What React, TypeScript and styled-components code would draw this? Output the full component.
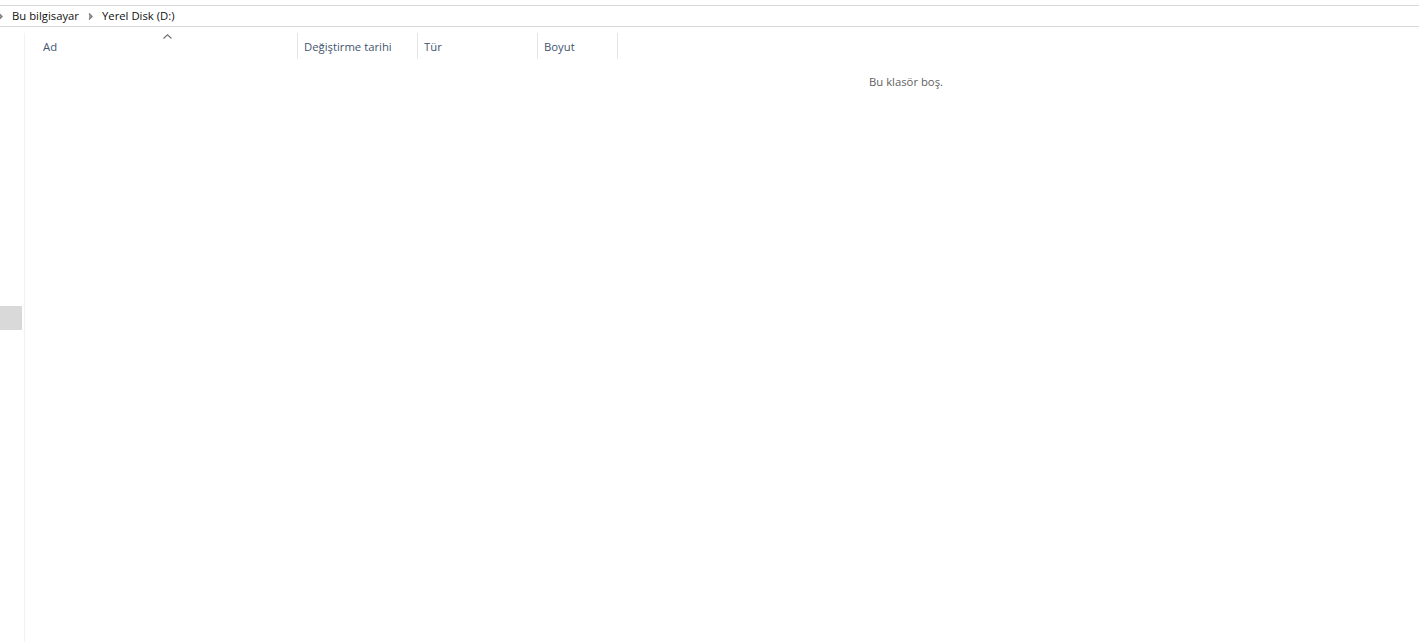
import React from "react";
import styled, { createGlobalStyle } from "styled-components";

const Global = createGlobalStyle`
  html, body { margin: 0; padding: 0; background: #fff; overflow: hidden; }
  body { font-family: "Open Sans", "Noto Sans", "Liberation Sans", sans-serif; font-size: 12px; }
`;

const Page = styled.div`
  height: 642px;
  display: flex;
  flex-direction: column;
  padding-top: 5px;
  box-sizing: border-box;
`;

const AddressBar = styled.div`
  height: 22px;
  box-sizing: border-box;
  border-top: 1px solid #d9d9d9;
  border-bottom: 1px solid #d9d9d9;
  padding-bottom: 2px;
  display: flex;
  align-items: center;
  color: #111;
  font-size: 11.3px;
`;

const Crumb = styled.span`
  white-space: nowrap;
`;

const Chevron = styled.svg<{ $lead: number; $gap: number }>`
  width: 5px;
  height: 7px;
  flex: none;
  margin: 2px ${(p) => p.$gap}px 0 ${(p) => p.$lead}px;
`;

const Body = styled.div`
  flex: 1;
  display: flex;
  min-height: 0;
`;

const NavPane = styled.div`
  width: 25px;
  box-sizing: border-box;
  margin-top: 6px;
  border-right: 1px solid #f2f2f2;
  padding-top: 273px;
`;

const NavSelection = styled.div`
  width: 22px;
  height: 24px;
  background: #d9d9d9;
`;

const Content = styled.div`
  flex: 1;
  min-width: 0;
  display: flex;
  flex-direction: column;
`;

const HeaderRow = styled.div`
  display: flex;
  height: 26px;
  margin-top: 6px;
  padding-left: 12px;
`;

const HeaderCell = styled.div<{ $width: number }>`
  position: relative;
  width: ${(p) => p.$width}px;
  box-sizing: border-box;
  padding-left: 6px;
  border-right: 1px solid #e5e5e5;
  color: #435570;
  font-size: 11.3px;
  line-height: 27px;
  white-space: nowrap;
`;

const SortArrow = styled.svg`
  position: absolute;
  left: 126px;
  top: 1px;
  width: 9px;
  height: 5px;
`;

const EmptyNote = styled.div`
  margin-top: 15px;
  padding-left: 844px;
  color: #5f5f5f;
  font-size: 11.3px;
  line-height: 16px;
  white-space: nowrap;
`;

const Arrow = ({ lead, gap }: { lead: number; gap: number }) => (
  <Chevron $lead={lead} $gap={gap} viewBox="0 0 5 7">
    <path d="M1 0.5 L4 3.5 L1 6.5" fill="#a0a0a0" stroke="#808080" strokeWidth="1.4" />
  </Chevron>
);

export default function App() {
  return (
    <Page>
      <Global />
      <AddressBar>
        <Arrow lead={-2} gap={9} />
        <Crumb>Bu bilgisayar</Crumb>
        <Arrow lead={9} gap={9} />
        <Crumb>Yerel Disk (D:)</Crumb>
      </AddressBar>
      <Body>
        <NavPane>
          <NavSelection />
        </NavPane>
        <Content>
          <HeaderRow>
            <HeaderCell $width={261}>
              Ad
              <SortArrow viewBox="0 0 9 5">
                <path d="M0.5 4.5 L4.5 0.8 L8.5 4.5" fill="none" stroke="#707070" strokeWidth="1.1" />
              </SortArrow>
            </HeaderCell>
            <HeaderCell $width={120}>Değiştirme tarihi</HeaderCell>
            <HeaderCell $width={120}>Tür</HeaderCell>
            <HeaderCell $width={80}>Boyut</HeaderCell>
          </HeaderRow>
          <EmptyNote>Bu klasör boş.</EmptyNote>
        </Content>
      </Body>
    </Page>
  );
}
